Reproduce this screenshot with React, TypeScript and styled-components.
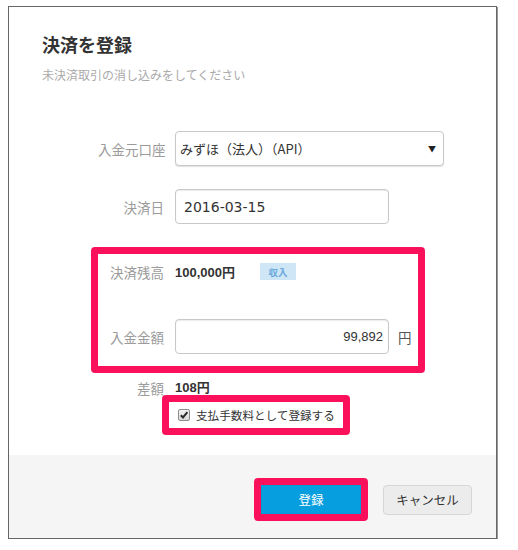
import React from 'react'
import styled, { createGlobalStyle } from 'styled-components'

const GlobalStyle = createGlobalStyle`
  body {
    margin: 0;
    padding: 6px 0 0 8px;
    background: #fff;
    font-family: 'Noto Sans CJK JP', sans-serif;
    color: #333;
  }
`

const PINK = '#fb115b'

const Dialog = styled.div`
  width: 489px;
  box-sizing: border-box;
  border: 1px solid #666;
  box-shadow: 1px 1px 0 #999;
  background: #fff;
`

const Header = styled.div`
  padding: 25px 33px 0;
`

const Title = styled.h1`
  margin: 0;
  font-size: 18px;
  line-height: 24px;
  font-weight: 700;
  color: #333;
`

const Subtitle = styled.p`
  margin: 10px 0 0;
  font-size: 12px;
  line-height: 18px;
  color: #aaa;
`

const Form = styled.div`
  margin-top: 47px;
  padding: 0 0 20px 89px;
  display: flex;
  flex-direction: column;
  align-items: flex-start;
`

const Row = styled.div<{ $gap?: number }>`
  display: flex;
  align-items: center;
  gap: 11px;
  min-height: 35px;
  margin-top: ${({ $gap }) => $gap ?? 0}px;
`

const Label = styled.span`
  width: 66px;
  flex: none;
  text-align: right;
  font-size: 13.5px;
  line-height: 18px;
  color: #9b9b9b;
  white-space: nowrap;
`

const Highlight = styled.div`
  box-sizing: border-box;
  border: 7px solid ${PINK};
  border-radius: 4px;
`

const AmountBox = styled(Highlight)`
  width: 334px;
  margin: 23px 0 0 -7px;
  padding: 0 0 12px;
`

const Control = styled.div<{ $width: number }>`
  box-sizing: border-box;
  width: ${({ $width }) => $width}px;
  height: 35px;
  display: flex;
  align-items: center;
  border: 1px solid #c8c8c8;
  border-radius: 4px;
  box-shadow: inset 0 1px 1px rgba(0, 0, 0, 0.08);
  background: #fff;
  color: #333;
`

const Select = styled(Control)`
  justify-content: space-between;
  padding: 0 7px 0 4px;
  font-size: 13px;
  box-shadow: 0 1px 1px rgba(0, 0, 0, 0.12);
`

const Caret = styled.span`
  font-size: 8px;
  color: #222;
`

const DateInput = styled(Control)`
  padding: 0 8px;
  font-family: 'DejaVu Sans', 'Noto Sans CJK JP', sans-serif;
  font-size: 14px;
`

const AmountInput = styled(Control)`
  justify-content: flex-end;
  padding: 0 5px;
  font-family: 'Liberation Sans', sans-serif;
  font-size: 13px;
`

const Value = styled.span`
  font-family: 'Liberation Sans', 'Noto Sans CJK JP', sans-serif;
  font-size: 13px;
  font-weight: 700;
  color: #333;
`

const Badge = styled.span`
  margin-left: 14px;
  width: 36px;
  height: 17px;
  display: inline-flex;
  align-items: center;
  justify-content: center;
  background: #cfe6f6;
  color: #6aa9dc;
  font-size: 9.5px;
  font-weight: 700;
`

const Unit = styled.span`
  margin-left: -2px;
  font-size: 13.5px;
  color: #555;
`

const DiffRow = styled.div`
  display: flex;
  align-items: center;
  gap: 11px;
  margin-top: 6px;
  line-height: 16px;
`

const CheckBox = styled(Highlight)`
  margin: -2px 0 0 64px;
  height: 40px;
  display: flex;
  align-items: center;
  gap: 6px;
  padding: 0 8px 0 9px;
  font-size: 11.6px;
  color: #333;
`

const Tick = styled.span`
  width: 12px;
  height: 12px;
  box-sizing: border-box;
  display: inline-flex;
  border: 1px solid #8d8d8d;
  border-radius: 2px;
  background: linear-gradient(#f2f2f2, #d9d9d9);
`

const Footer = styled.div`
  display: flex;
  justify-content: flex-end;
  align-items: center;
  gap: 15px;
  padding: 23px 24px 17px;
  background: #f5f5f5;
`

const PrimaryWrap = styled(Highlight)`
  padding: 0;
`

const Button = styled.button<{ $primary?: boolean }>`
  box-sizing: border-box;
  margin: 0;
  font-family: 'Noto Sans CJK JP', sans-serif;
  font-size: 12.5px;
  cursor: pointer;
  border-radius: ${({ $primary }) => ($primary ? '0' : '4px')};
  width: ${({ $primary }) => ($primary ? '100px' : '89px')};
  height: ${({ $primary }) => ($primary ? '29px' : '30px')};
  border: 1px solid ${({ $primary }) => ($primary ? '#069ad9' : '#d6d6d6')};
  background: ${({ $primary }) => ($primary ? '#079ee0' : '#ececec')};
  color: ${({ $primary }) => ($primary ? '#fff' : '#333')};
  display: block;
`

export default function App(): JSX.Element {
  return (
    <>
      <GlobalStyle />
      <Dialog>
        <Header>
          <Title>決済を登録</Title>
          <Subtitle>未決済取引の消し込みをしてください</Subtitle>
        </Header>
        <Form>
          <Row>
            <Label>入金元口座</Label>
            <Select $width={269}>
              <span>みずほ（法人）（API）</span>
              <Caret>▼</Caret>
            </Select>
          </Row>
          <Row $gap={23}>
            <Label>決済日</Label>
            <DateInput $width={214}>2016-03-15</DateInput>
          </Row>
          <AmountBox>
            <Row>
              <Label>決済残高</Label>
              <Value>100,000円</Value>
              <Badge>収入</Badge>
            </Row>
            <Row $gap={30}>
              <Label>入金金額</Label>
              <AmountInput $width={214}>99,892</AmountInput>
              <Unit>円</Unit>
            </Row>
          </AmountBox>
          <DiffRow>
            <Label>差額</Label>
            <Value>108円</Value>
          </DiffRow>
          <CheckBox>
            <Tick>
              <svg width="10" height="10" viewBox="0 0 10 10">
                <path d="M1.8 5.2 L4 7.4 L8.4 2.2" fill="none" stroke="#2b2b2b" strokeWidth="2" />
              </svg>
            </Tick>
            <span>支払手数料として登録する</span>
          </CheckBox>
        </Form>
        <Footer>
          <PrimaryWrap>
            <Button $primary>登録</Button>
          </PrimaryWrap>
          <Button>キャンセル</Button>
        </Footer>
      </Dialog>
    </>
  )
}
